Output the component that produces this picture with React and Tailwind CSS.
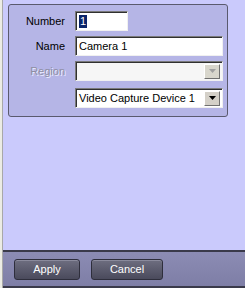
import React from "react";

const font = { fontFamily: '"Liberation Sans", Arial, sans-serif' };

function TextBox({ className = "", children, disabled }) {
  return (
    <div
      className={`h-[20px] border border-t-[#7a7a7a] border-l-[#7a7a7a] border-b-[#f0f0f0] border-r-[#f0f0f0] shadow-[inset_1px_1px_0_#303030] flex items-center pl-[3px] text-[11px] text-black ${
        disabled ? "bg-[#f6f6f6]" : "bg-white"
      } ${className}`}
    >
      {children}
    </div>
  );
}

function Select({ children, disabled }) {
  return (
    <TextBox disabled={disabled} className="pr-[2px] justify-between">
      <span>{children}</span>
      <span
        className={`w-[16px] h-[15px] flex items-center justify-center border border-t-white border-l-white border-b-[#707070] border-r-[#707070] ${
          disabled ? "bg-[#d8d6cc]" : "bg-[#d4d0c8]"
        }`}
      >
        <svg width="7" height="4" viewBox="0 0 7 4">
          <path d="M0 0h7L3.5 4z" fill={disabled ? "#a0a0a0" : "#000"} />
        </svg>
      </span>
    </TextBox>
  );
}

function Row({ label, disabled, children, className = "" }) {
  return (
    <div className={`flex items-center ${className}`}>
      <div
        className={`w-[56px] text-right text-[11px] ${
          disabled ? "text-[#8e8ea2] [text-shadow:1px_1px_0_#ececff]" : "text-black"
        }`}
      >
        {label}
      </div>
      <div className="ml-[10px] flex-1">{children}</div>
    </div>
  );
}

function Button({ children, className = "" }) {
  return (
    <button
      className={`h-[21px] rounded-[3px] border border-[#2e2e3c] bg-gradient-to-b from-[#6e6e80] to-[#4a4a5c] text-white text-[11px] shadow-[inset_0_1px_0_#8a8a9c] ${className}`}
    >
      {children}
    </button>
  );
}

export default function App() {
  return (
    <div className="w-[245px] h-[288px] flex overflow-hidden" style={font}>
      {/* left edge */}
      <div className="w-[2px] bg-[#ecece4]" />
      <div className="w-[1px] bg-[#a8a8a8]" />

      <div className="flex-1 flex flex-col">
        <div className="flex-1 bg-[#cacafc] pt-[4px] pl-[5px]">
          {/* properties panel */}
          <div className="w-[220px] h-[113px] rounded-[3px] border border-[#5a5a6e] bg-[#b5b5e6] pt-[6px] pr-[4px]">
            <Row label="Number">
              <TextBox className="w-[53px]">
                <span className="bg-[#0a246a] text-white leading-[13px] px-[1px]">1</span>
              </TextBox>
            </Row>
            <Row label="Name" className="mt-[5px]">
              <TextBox>Camera 1</TextBox>
            </Row>
            <Row label="Region" disabled className="mt-[5px]">
              <Select disabled />
            </Row>
            <Row label="" className="mt-[7px]">
              <Select>Video Capture Device 1</Select>
            </Row>
          </div>
        </div>

        {/* bottom bar */}
        <div className="h-[38px] border-t-2 border-t-[#3a3a4a] border-b-2 border-b-[#3a3a4a] bg-gradient-to-b from-[#8c8cb4] to-[#7e7ea6] flex items-center pl-[11px] gap-[11px]">
          <Button className="w-[66px]">Apply</Button>
          <Button className="w-[72px]">Cancel</Button>
        </div>
      </div>
    </div>
  );
}
